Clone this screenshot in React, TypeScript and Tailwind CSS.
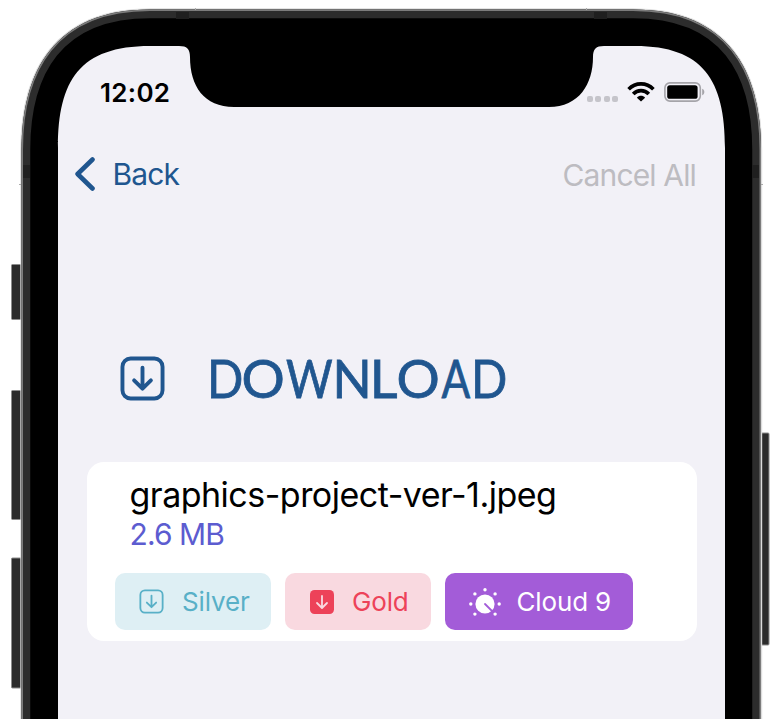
import type { CSSProperties } from "react";

const BODY =
  "M21.5 730 V150 C21.5 71 55 9.5 150 9.5 H633 C728 9.5 761 71 761 150 V730 Z";

function DeviceFrame() {
  return (
    <svg className="absolute inset-0" width="782" height="719" viewBox="0 0 782 719" aria-hidden="true">
      <defs>
        <clipPath id="body">
          <path d={BODY} />
        </clipPath>
      </defs>
      <g fill="#2b2b2b" stroke="#8c8c8c" strokeWidth="1">
        <rect x="11.5" y="264.5" width="12" height="55" rx="1" />
        <rect x="11.5" y="390.5" width="12" height="129" rx="1" />
        <rect x="11.5" y="558" width="12" height="130" rx="1" />
        <rect x="758" y="433" width="11" height="212" rx="1" />
      </g>
      <path d={BODY} fill="none" stroke="#dcdcdc" strokeWidth="2.4" />
      <g clipPath="url(#body)">
        <path d={BODY} fill="#000" stroke="#2c2c2c" strokeWidth="17.5" />
        <path d={BODY} fill="none" stroke="#7c7c7c" strokeWidth="3" />
        <g fill="#1f1f1f">
          <rect x="176" y="12" width="13" height="7" />
          <rect x="594" y="12" width="13" height="7" />
          <rect x="23" y="165" width="7" height="13" />
          <rect x="752" y="165" width="7" height="13" />
        </g>
      </g>
      <path d="M195.5 8 V10 M586.5 8 V10 M19 184.5 H21 M761 184.5 H763" stroke="#aaa" strokeWidth="1" />
      <path
        d="M58 730 V148 C58 80 80 46 150 46 H179 C187 46 190 49 190 57 C190 86 204 107 234 107 H549 C579 107 593 84 593 57 C593 49 596 46 604 46 H635 C703 46 725 80 725 148 V730 Z"
        fill="#f2f1f7"
      />
    </svg>
  );
}

function WifiIcon() {
  return (
    <svg width="28" height="20" viewBox="0 0 28 20" fill="none" stroke="#000" strokeWidth="3.7">
      <path d="M1.6 7.2 C8.5 0.2 19.5 0.2 26.4 7.2" />
      <path d="M6.2 12 C10.5 7.6 17.5 7.6 21.8 12" />
      <path d="M14 19.6 L9.9 15.8 C12.2 13.2 15.8 13.2 18.1 15.8 Z" fill="#000" stroke="none" />
    </svg>
  );
}

function BatteryIcon() {
  return (
    <svg width="41" height="20" viewBox="0 0 41 20">
      <rect x="0.9" y="0.9" width="35.4" height="18.2" rx="5" fill="none" stroke="#a5a4a9" strokeWidth="1.6" />
      <rect x="3.2" y="3.2" width="30.4" height="13.6" rx="2.6" fill="#000" />
      <path d="M38.2 6.7 C41 7.7 41 12.3 38.2 13.3 Z" fill="#a5a4a9" />
    </svg>
  );
}

function DownloadSquare({ size, stroke }: { size: number; stroke: number }) {
  return (
    <svg width={size} height={size} viewBox="0 0 44 44" fill="none" stroke="currentColor" strokeWidth={stroke} strokeLinecap="round" strokeLinejoin="round">
      <rect x="2.4" y="2.4" width="39.2" height="39.2" rx="8" />
      <path d="M22 11.5 V31.5 M13.8 23.8 L22 32 L30.2 23.8" />
    </svg>
  );
}

function DownloadSquareFilled() {
  return (
    <svg width="24" height="24" viewBox="0 0 24 24" fill="none">
      <rect width="24" height="24" rx="4.5" fill="#ed4259" />
      <path d="M12 6 V17.5 M7 13 L12 18 L17 13" stroke="#f9d9e0" strokeWidth="1.8" strokeLinecap="round" strokeLinejoin="round" />
    </svg>
  );
}

function DialIcon() {
  return (
    <svg width="32" height="32" viewBox="0 0 32 32" fill="#fff">
      <circle cx="16" cy="16" r="9.6" />
      <path d="M16 16 L23.5 23.5" stroke="#a35cd8" strokeWidth="1.8" strokeLinecap="round" />
      <circle cx="1.8" cy="16" r="1.7" />
      <circle cx="5.9" cy="5.9" r="1.7" />
      <circle cx="16" cy="1.8" r="1.7" />
      <circle cx="26.1" cy="5.9" r="1.7" />
      <circle cx="30.2" cy="16" r="1.7" />
      <circle cx="5.9" cy="26.1" r="1.7" />
      <circle cx="26.1" cy="26.1" r="1.7" />
    </svg>
  );
}

// Each letter of the heading has its own cell width and horizontal stretch.
const TITLE = [
  { c: "D", w: 34, s: 0.9 },
  { c: "O", w: 43, s: 1.02 },
  { c: "W", w: 49, s: 0.85 },
  { c: "N", w: 36, s: 0.97 },
  { c: "L", w: 27, s: 1.02 },
  { c: "O", w: 43, s: 1.02 },
  { c: "A", w: 31, s: 0.8 },
  { c: "D", w: 36, s: 0.9 },
];

function Title() {
  return (
    <h1 className="flex font-['Lato',sans-serif] text-[53px] leading-[60px] [-webkit-text-stroke:0.8px_#20568f]">
      {TITLE.map(({ c, w, s }, i) => {
        const cell: CSSProperties = { width: w };
        const glyph: CSSProperties = { transform: `scaleX(${s})` };
        return (
          <span key={i} className="flex justify-center" style={cell}>
            <span className="shrink-0" style={glyph}>{c}</span>
          </span>
        );
      })}
    </h1>
  );
}

export default function App() {
  return (
    <div className="relative h-[719px] w-[782px] overflow-hidden bg-white font-['Inter',sans-serif]">
      <DeviceFrame />
      <main className="relative ml-[58px] flex w-[667px] flex-col pt-[72px]">
        <header className="flex h-10 items-center justify-between pr-[20px] pl-[42px]">
          <span className="text-[26px] font-semibold tracking-[0.3px]">12:02</span>
          <div className="flex items-center">
            <div className="mt-[14px] mr-[9px] flex gap-[2.5px]">
              <i className="size-[6px] rounded-[2px] bg-[#c5c4ca]" />
              <i className="size-[6px] rounded-[2px] bg-[#c5c4ca]" />
              <i className="size-[6px] rounded-[2px] bg-[#c5c4ca]" />
              <i className="size-[6px] rounded-[2px] bg-[#c5c4ca]" />
            </div>
            <WifiIcon />
            <div className="w-[9px]" />
            <BatteryIcon />
          </div>
        </header>

        <nav className="mt-[42px] flex h-10 items-center justify-between pr-[29px] pl-[16.5px] text-[30px] tracking-[-0.85px]">
          <button className="flex items-center gap-[18px] text-[#20568f]">
            <svg width="20" height="34" viewBox="0 0 20 34" fill="none" stroke="#20568f" strokeWidth="4.6" strokeLinecap="round" strokeLinejoin="round">
              <path d="M17.5 2.5 L2.6 17 L17.5 31.5" />
            </svg>
            <span>Back</span>
          </button>
          <span className="pt-[2px] text-[#bdbcc1]">Cancel All</span>
        </nav>

        <div className="mt-[154px] flex h-[60px] items-center gap-[43px] pl-[62px] text-[#20568f]">
          <div className="pt-px">
            <DownloadSquare size={45} stroke={3.8} />
          </div>
          <Title />
        </div>

        <section className="mt-[54px] ml-[29px] h-[179px] w-[610px] rounded-[17px] bg-white pt-[12px]">
          <div className="pl-[42.5px]">
            <p className="text-[34px] leading-[42px] tracking-[-0.51px]">graphics-project-ver-1.jpeg</p>
            <p className="text-[30px] leading-[36px] tracking-[-0.9px] text-[#5c5cd0]">2.6 MB</p>
          </div>
          <div className="mt-[21px] flex gap-[14px] pl-[28px] text-[26px] tracking-[-0.15px]">
            <button className="flex h-[57px] w-[156px] items-center gap-[18px] rounded-[10px] bg-[#deeff4] pl-[24px] text-[#58b0c7]">
              <DownloadSquare size={25} stroke={3.2} />
              <span>Silver</span>
            </button>
            <button className="flex h-[57px] w-[145.5px] items-center gap-[18px] rounded-[10px] bg-[#f9d9e0] pl-[25px] text-[#ed4259]">
              <DownloadSquareFilled />
              <span>Gold</span>
            </button>
            <button className="flex h-[57px] w-[188.5px] items-center gap-[16px] rounded-[10px] bg-[#a35cd8] pl-[24px] text-white">
              <div className="pt-[4px]">
                <DialIcon />
              </div>
              <span>Cloud 9</span>
            </button>
          </div>
        </section>
      </main>
    </div>
  );
}
